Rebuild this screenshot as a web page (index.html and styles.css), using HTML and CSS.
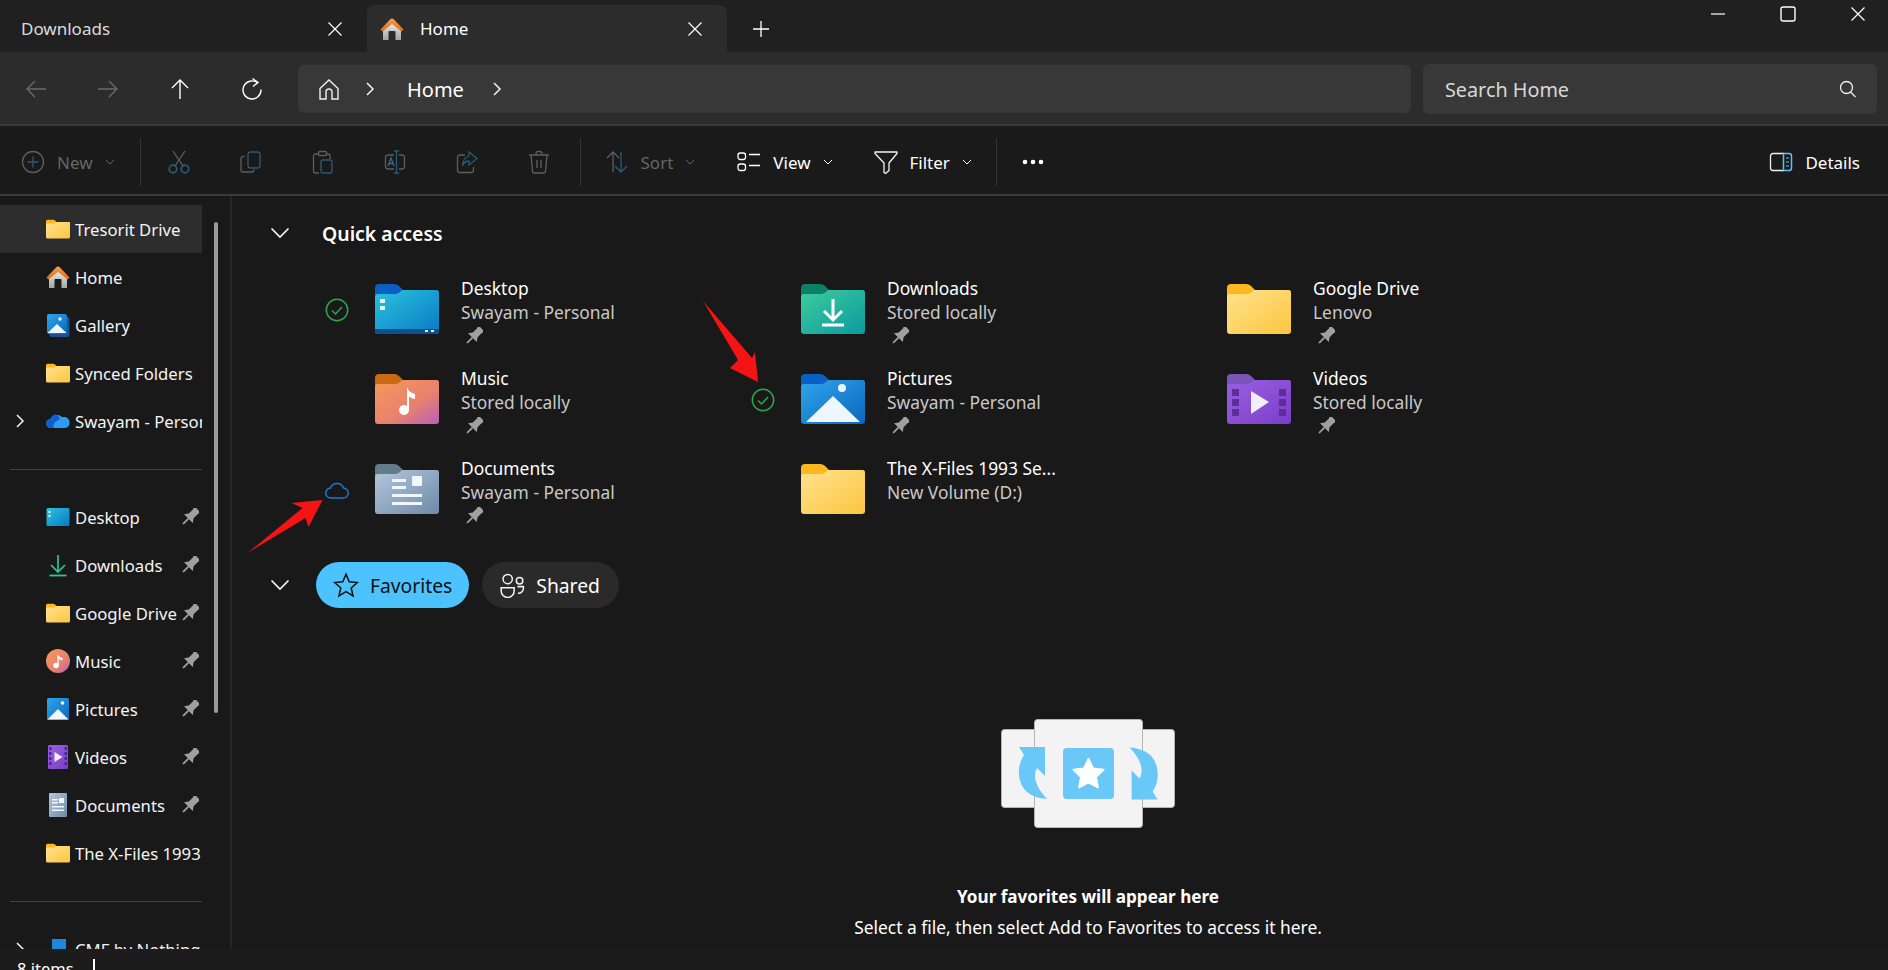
FILE: index.html
```html
<!DOCTYPE html>
<html lang="en">
<head>
    <meta charset="UTF-8">
    <meta name="viewport" content="width=device-width, initial-scale=1.0">
    <title>Home - File Explorer</title>
    <link rel="stylesheet" href="styles.css">
</head>
<body>
    <!-- shared icons -->
    <svg class="sprite" aria-hidden="true">
        <defs>
            <linearGradient id="g-yellow" x1="0" y1="0" x2="1" y2="1"><stop offset="0" stop-color="#ffe28f"/><stop offset="1" stop-color="#fcc63f"/></linearGradient>
            <linearGradient id="g-cyan" x1="0" y1="0" x2="1" y2="1"><stop offset="0" stop-color="#2ac4df"/><stop offset="1" stop-color="#0a78c4"/></linearGradient>
            <linearGradient id="g-green" x1="0" y1="0" x2="1" y2="1"><stop offset="0" stop-color="#3ecb9f"/><stop offset="1" stop-color="#0b9a9e"/></linearGradient>
            <linearGradient id="g-music" x1="0" y1="0" x2="1" y2="1"><stop offset="0" stop-color="#f59a57"/><stop offset=".6" stop-color="#e8806f"/><stop offset="1" stop-color="#b860b8"/></linearGradient>
            <linearGradient id="g-blue" x1="0" y1="0" x2="1" y2="1"><stop offset="0" stop-color="#2fa6ea"/><stop offset="1" stop-color="#0b66bd"/></linearGradient>
            <linearGradient id="g-purple" x1="0" y1="0" x2="1" y2="1"><stop offset="0" stop-color="#9a5fe0"/><stop offset="1" stop-color="#7a3fc8"/></linearGradient>
            <linearGradient id="g-docs" x1="0" y1="0" x2="1" y2="1"><stop offset="0" stop-color="#b4c7dc"/><stop offset="1" stop-color="#6e8aa8"/></linearGradient>
            <linearGradient id="g-house" x1="0" y1="0" x2="0" y2="1"><stop offset="0" stop-color="#f4f4f4"/><stop offset="1" stop-color="#a4a4a4"/></linearGradient>
            <linearGradient id="g-roof" x1="0" y1="0" x2="0" y2="1"><stop offset="0" stop-color="#f6a14a"/><stop offset="1" stop-color="#dd6a10"/></linearGradient>

            <symbol id="f-yellow" viewBox="0 0 64 50">
                <path d="M0 4a4 4 0 0 1 4-4h15q3 0 5 2l4 4h33a3 3 0 0 1 3 3v8H0z" fill="#fdb820"/>
                <path d="M0 13a3 3 0 0 1 3-3h17q3 0 5-2l2-2h34a3 3 0 0 1 3 3v38a3 3 0 0 1-3 3H3a3 3 0 0 1-3-3z" fill="url(#g-yellow)"/>
            </symbol>
            <symbol id="f-desktop" viewBox="0 0 64 50">
                <path d="M0 4a4 4 0 0 1 4-4h15q3 0 5 2l4 4h33a3 3 0 0 1 3 3v8H0z" fill="#0a5fc4"/>
                <path d="M0 13a3 3 0 0 1 3-3h17q3 0 5-2l2-2h34a3 3 0 0 1 3 3v38a3 3 0 0 1-3 3H3a3 3 0 0 1-3-3z" fill="url(#g-cyan)"/>
                <path d="M0 45h64v2a3 3 0 0 1-3 3H3a3 3 0 0 1-3-3z" fill="#0f4f8f"/>
                <path d="M5 15h5v4H5zM5 22h5v4H5zM50 46h3v2h-3zM56 46h3v2h-3z" fill="#e4f4fb"/>
            </symbol>
            <symbol id="f-downloads" viewBox="0 0 64 50">
                <path d="M0 4a4 4 0 0 1 4-4h15q3 0 5 2l4 4h33a3 3 0 0 1 3 3v8H0z" fill="#0b7f68"/>
                <path d="M0 13a3 3 0 0 1 3-3h17q3 0 5-2l2-2h34a3 3 0 0 1 3 3v38a3 3 0 0 1-3 3H3a3 3 0 0 1-3-3z" fill="url(#g-green)"/>
                <path d="M32 15v20M23 27l9 9 9-9" fill="none" stroke="#fff" stroke-width="3"/>
                <path d="M21 41h22" stroke="#fff" stroke-width="3"/>
            </symbol>
            <symbol id="f-music" viewBox="0 0 64 50">
                <path d="M0 4a4 4 0 0 1 4-4h15q3 0 5 2l4 4h33a3 3 0 0 1 3 3v8H0z" fill="#c96a12"/>
                <path d="M0 13a3 3 0 0 1 3-3h17q3 0 5-2l2-2h34a3 3 0 0 1 3 3v38a3 3 0 0 1-3 3H3a3 3 0 0 1-3-3z" fill="url(#g-music)"/>
                <circle cx="29" cy="36" r="5" fill="#fff"/>
                <path d="M32 36V13q1 5 8 7v5q-5-1-6-3v14z" fill="#fff"/>
            </symbol>
            <symbol id="f-pictures" viewBox="0 0 64 50">
                <path d="M0 4a4 4 0 0 1 4-4h15q3 0 5 2l4 4h33a3 3 0 0 1 3 3v8H0z" fill="#0a5fc4"/>
                <path d="M0 13a3 3 0 0 1 3-3h17q3 0 5-2l2-2h34a3 3 0 0 1 3 3v38a3 3 0 0 1-3 3H3a3 3 0 0 1-3-3z" fill="url(#g-blue)"/>
                <path d="M5 48l27-26 27 26z" fill="#eef7fd"/>
                <circle cx="41" cy="14" r="4" fill="#e8f5fd"/>
            </symbol>
            <symbol id="f-videos" viewBox="0 0 64 50">
                <path d="M0 4a4 4 0 0 1 4-4h15q3 0 5 2l4 4h33a3 3 0 0 1 3 3v8H0z" fill="#7a55b8"/>
                <path d="M0 13a3 3 0 0 1 3-3h17q3 0 5-2l2-2h34a3 3 0 0 1 3 3v38a3 3 0 0 1-3 3H3a3 3 0 0 1-3-3z" fill="url(#g-purple)"/>
                <path d="M5 15h7v7H5zM5 25h7v7H5zM5 35h7v7H5zM52 15h7v7h-7zM52 25h7v7h-7zM52 35h7v7h-7z" fill="#5a2f9a"/>
                <path d="M24 17l18 11-18 12z" fill="#f3eefb"/>
            </symbol>
            <symbol id="f-docs" viewBox="0 0 64 50">
                <path d="M0 4a4 4 0 0 1 4-4h15q3 0 5 2l4 4h33a3 3 0 0 1 3 3v8H0z" fill="#637c8c"/>
                <path d="M0 13a3 3 0 0 1 3-3h17q3 0 5-2l2-2h34a3 3 0 0 1 3 3v38a3 3 0 0 1-3 3H3a3 3 0 0 1-3-3z" fill="url(#g-docs)"/>
                <path d="M17 15h14v3H17zM17 22h14v3H17zM17 30h30v3H17zM17 38h30v3H17z" fill="#f2f6fa"/>
                <rect x="37" y="12" width="10" height="10" rx="1" fill="#f2f6fa"/>
            </symbol>

            <symbol id="pin" viewBox="0 0 16 16">
                <g transform="rotate(45 8 8)" fill="#a0a0a0">
                    <path d="M3.500 -1.500h9v2h-1.500v6l2.500 3.500H2.500l2.500-3.500v-6H3.500z"/>
                    <path d="M7.200 10h1.600v6l-.8 1.500-.8-1.500z"/>
                </g>
            </symbol>
            <symbol id="house" viewBox="0 0 24 24">
                <path d="M3 11L12 3l9 8v12h-5.500V15a1 1 0 0 0-1-1h-5a1 1 0 0 0-1 1v8H3z" fill="url(#g-house)"/>
                <path d="M.5 12.500L10 2.500q2-2 4 0l9.500 10-1.800 2L12 7 2.300 14.500z" fill="url(#g-roof)"/>
            </symbol>
            <symbol id="gallery" viewBox="0 0 24 24">
                <rect x="3.500" y="4" width="20" height="20" rx="2" fill="#1d4f94"/>
                <rect x="1" y="1" width="20" height="20" rx="2" fill="url(#g-blue)"/>
                <path d="M1.500 20L11 11l9.500 9z" fill="#eef7fd"/>
                <circle cx="14" cy="6" r="1.700" fill="#eef7fd"/>
            </symbol>
            <symbol id="cloud" viewBox="0 0 24 24">
                <path d="M5 19a4.500 4.500 0 0 1-.6-9A7 7 0 0 1 16 8.300 5.500 5.500 0 0 1 23.500 14a5 5 0 0 1-4.500 5z" fill="#2f9cf0"/>
                <path d="M5 19a4.500 4.500 0 0 1-.6-9A7 7 0 0 1 9.500 5.300 7 7 0 0 1 14 10l-3 2a5 5 0 0 0-3 7z" fill="#0f5fd0"/>
            </symbol>
            <symbol id="desktop" viewBox="0 0 24 24">
                <rect x="0.500" y="3" width="23" height="18" rx="1.500" fill="url(#g-cyan)"/>
                <path d="M2.500 6h2v2h-2zM2.500 10h2v2h-2z" fill="#e4f4fb"/>
            </symbol>
            <symbol id="dl" viewBox="0 0 24 24">
                <path d="M12 2v16M5 12l7 7 7-7" fill="none" stroke="#2fc39a" stroke-width="1.700"/>
                <path d="M3.500 22.500h17" stroke="#2fc39a" stroke-width="1.800"/>
            </symbol>
            <symbol id="music" viewBox="0 0 24 24">
                <circle cx="12" cy="12" r="12" fill="url(#g-music)"/>
                <circle cx="10" cy="16.500" r="2.800" fill="#fff"/>
                <path d="M11.500 16.500V5q1 3 5 4v2.500q-3-.5-3.800-2V16.500z" fill="#fff"/>
            </symbol>
            <symbol id="pics" viewBox="0 0 24 24">
                <rect x="1" y="1" width="22" height="22" rx="1.500" fill="url(#g-blue)"/>
                <path d="M1.500 22.500L12 12l10.500 10.500z" fill="#eef7fd"/>
                <circle cx="16.500" cy="6" r="1.800" fill="#eef7fd"/>
            </symbol>
            <symbol id="vids" viewBox="0 0 24 24">
                <rect x="2" y="0" width="20" height="24" rx="1.500" fill="url(#g-purple)"/>
                <path d="M3 2h2.500v3H3zM3 7h2.500v3H3zM3 12h2.500v3H3zM3 17h2.500v3H3zM18.500 2H21v3h-2.500zM18.500 7H21v3h-2.500zM18.500 12H21v3h-2.500zM18.500 17H21v3h-2.500z" fill="#4d2794"/>
                <path d="M8.500 7l8 5-8 5z" fill="#f3eefb"/>
            </symbol>
            <symbol id="docs" viewBox="0 0 24 24">
                <rect x="3" y="0" width="18" height="24" rx="1" fill="url(#g-docs)"/>
                <path d="M6 6h6v1.500H6zM6 9h6v1.500H6zM6 13h12v1.500H6zM6 16.500h12V18H6z" fill="#f2f6fa"/>
                <rect x="13" y="5" width="5" height="5" fill="#f2f6fa"/>
            </symbol>
            <symbol id="tick" viewBox="0 0 24 24">
                <circle cx="12" cy="12" r="10.700" fill="none" stroke="#2aa84a" stroke-width="1.500"/>
                <path d="M7 12.500l3.500 3.500L17 9" fill="none" stroke="#2aa84a" stroke-width="1.500"/>
            </symbol>
            <symbol id="x" viewBox="0 0 16 16"><path d="M1.500 1.500l13 13M14.500 1.500l-13 13" stroke="#fff" stroke-width="1.200" fill="none"/></symbol>
            <symbol id="chev-r" viewBox="0 0 12 16"><path d="M3 2l6 6-6 6" stroke="#f2f2f2" stroke-width="1.500" fill="none"/></symbol>
            <symbol id="chev-d" viewBox="0 0 10 6"><path d="M1 1l4 4 4-4" stroke="currentColor" stroke-width="1" fill="none"/></symbol>
            <symbol id="chev-big" viewBox="0 0 20 12"><path d="M1.500 1.500L10 10l8.500-8.500" stroke="#f4f4f4" stroke-width="1.700" fill="none"/></symbol>
        </defs>
    </svg>

    <!-- tab strip -->
    <div class="tabbar">
        <div class="tab">
            <span class="tab-title dim">Downloads</span>
            <svg class="tab-x"><use href="#x"/></svg>
        </div>
        <div class="tab active">
            <svg class="tab-icon"><use href="#house"/></svg>
            <span class="tab-title">Home</span>
            <svg class="tab-x"><use href="#x"/></svg>
        </div>
        <svg class="tab-plus" viewBox="0 0 18 18"><path d="M9 1v16M1 9h16" stroke="#fff" stroke-width="1.300"/></svg>
        <div class="window-btns">
            <svg class="win-btn" viewBox="0 0 16 16"><path d="M1 8h14" stroke="#fff" stroke-width="1.200"/></svg>
            <svg class="win-btn" viewBox="0 0 16 16"><rect x="1" y="1" width="14" height="14" rx="2" fill="none" stroke="#fff" stroke-width="1.400"/></svg>
            <svg class="win-btn" viewBox="0 0 16 16"><use href="#x"/></svg>
        </div>
    </div>

    <!-- address row -->
    <div class="navbar">
        <div class="nav-btns">
            <svg class="nav-btn" viewBox="0 0 24 24"><path d="M22 12H3M11 4l-8 8 8 8" fill="none" stroke="#6a6a6a" stroke-width="1.400"/></svg>
            <svg class="nav-btn" viewBox="0 0 24 24"><path d="M2 12h19M13 4l8 8-8 8" fill="none" stroke="#6a6a6a" stroke-width="1.400"/></svg>
            <svg class="nav-btn" viewBox="0 0 24 24"><path d="M12 22V3M4 11l8-8 8 8" fill="none" stroke="#fff" stroke-width="1.400"/></svg>
            <svg class="nav-btn" viewBox="0 0 24 24"><path d="M17.500 5.800A9 9 0 1 0 21 12.500" fill="none" stroke="#fff" stroke-width="1.400"/><path d="M12.500 1.500l5.500 4-5 4" fill="none" stroke="#fff" stroke-width="1.400"/></svg>
        </div>
        <div class="address">
            <svg class="crumb-home" viewBox="0 0 24 24"><path d="M3 11.500L12 3l9 8.500V22h-6v-7a3 3 0 0 0-6 0v7H3z" fill="none" stroke="#f0f0f0" stroke-width="1.400"/></svg>
            <svg class="crumb-chev"><use href="#chev-r"/></svg>
            <span class="crumb">Home</span>
            <svg class="crumb-chev"><use href="#chev-r"/></svg>
        </div>
        <div class="search">
            <span>Search Home</span>
            <svg class="search-icon" viewBox="0 0 18 18"><circle cx="7.500" cy="7.500" r="6" fill="none" stroke="#eee" stroke-width="1.300"/><path d="M11.500 12l5 5" stroke="#eee" stroke-width="1.300"/></svg>
        </div>
    </div>

    <!-- command bar -->
    <div class="toolbar">
        <div class="tool first off">
            <svg class="tool-icon" viewBox="0 0 24 24"><circle cx="12" cy="12" r="10.500" fill="none" stroke="#5e5e5e" stroke-width="1.300"/><path d="M12 6.500v11M6.500 12h11" stroke="#2a5a78" stroke-width="1.400"/></svg>
            <span>New</span>
            <svg class="tool-chev"><use href="#chev-d"/></svg>
        </div>
        <span class="tool-sep"></span>
        <div class="tool-grid">
            <svg class="tool-icon" viewBox="0 0 24 24"><circle cx="6" cy="19" r="3.800" fill="none" stroke="#2a5a78" stroke-width="1.700"/><circle cx="18" cy="19" r="3.800" fill="none" stroke="#2a5a78" stroke-width="1.700"/><path d="M8 16L18 1M16 16L6 1" stroke="#5e5e5e" stroke-width="1.300"/></svg>
            <svg class="tool-icon" viewBox="0 0 24 24"><path d="M5.500 6.500H4a2 2 0 0 0-2 2V20a2 2 0 0 0 2 2h9a2 2 0 0 0 2-2v-.5" fill="none" stroke="#5e5e5e" stroke-width="1.300"/><rect x="9" y="2" width="12" height="16" rx="2.500" fill="none" stroke="#2a5a78" stroke-width="1.300"/></svg>
            <svg class="tool-icon" viewBox="0 0 24 24"><path d="M7.500 4H4.500a2 2 0 0 0-2 2v15a2 2 0 0 0 2 2H8M15 4h2a2 2 0 0 1 2 2v3" fill="none" stroke="#5e5e5e" stroke-width="1.300"/><rect x="7.500" y="1.500" width="8" height="4" rx="1" fill="none" stroke="#5e5e5e" stroke-width="1.300"/><rect x="10" y="10" width="11" height="13" rx="2" fill="none" stroke="#2a5a78" stroke-width="1.300"/></svg>
            <svg class="tool-icon" viewBox="0 0 24 24"><path d="M11 5H5a2.500 2.500 0 0 0-2.500 2.500v9A2.500 2.500 0 0 0 5 19h6M16 5h3a2.500 2.500 0 0 1 2.500 2.500v9A2.500 2.500 0 0 1 19 19h-3" fill="none" stroke="#5e5e5e" stroke-width="1.300"/><path d="M13.500 1v22M11 1h5M11 23h5" stroke="#2a5a78" stroke-width="1.300"/><path d="M5 16l3-8 3 8M6 13.500h4" fill="none" stroke="#3d6a88" stroke-width="1.300"/></svg>
            <svg class="tool-icon" viewBox="0 0 24 24"><path d="M10 5H5a2.500 2.500 0 0 0-2.500 2.500V20A2.500 2.500 0 0 0 5 22.500h11a2.500 2.500 0 0 0 2.500-2.500v-3" fill="none" stroke="#5e5e5e" stroke-width="1.300"/><path d="M14 2l8 6.500-8 6.500v-4q-5 0-6.500 5 0-8 6.500-10z" fill="none" stroke="#2a5a78" stroke-width="1.300"/></svg>
            <svg class="tool-icon" viewBox="0 0 24 24"><path d="M2 5h20M9 5V3a2 2 0 0 1 2-1.500h2A2 2 0 0 1 15 3v2M4 5l1.500 16a2 2 0 0 0 2 2h9a2 2 0 0 0 2-2L20 5M10 10v8M14 10v8" fill="none" stroke="#5e5e5e" stroke-width="1.300"/></svg>
        </div>
        <span class="tool-sep"></span>
        <div class="tool off sort">
            <svg class="tool-icon" viewBox="0 0 24 24"><path d="M8 22V2M2 8l6-6 6 6" fill="none" stroke="#5e5e5e" stroke-width="1.300"/><path d="M16 2v20M10 16l6 6 6-6" fill="none" stroke="#2a5a78" stroke-width="1.300"/></svg>
            <span>Sort</span>
            <svg class="tool-chev"><use href="#chev-d"/></svg>
        </div>
        <div class="tool view">
            <svg class="tool-icon" viewBox="0 0 24 24"><rect x="1" y="3" width="7.500" height="6.500" rx="2.200" fill="none" stroke="#fff" stroke-width="1.300"/><rect x="1" y="14" width="7.500" height="6.500" rx="2.200" fill="none" stroke="#fff" stroke-width="1.300"/><path d="M12 4.500h11M12 15.500h11" stroke="#fff" stroke-width="1.300"/></svg>
            <span>View</span>
            <svg class="tool-chev"><use href="#chev-d"/></svg>
        </div>
        <div class="tool filter">
            <svg class="tool-icon" viewBox="0 0 24 24"><path d="M1 2h22v1.500L15 13v7.500L11.500 23.500 10 22.500V13L1 3.500z" fill="none" stroke="#f4f4f4" stroke-width="1.300" stroke-linejoin="round"/></svg>
            <span>Filter</span>
            <svg class="tool-chev"><use href="#chev-d"/></svg>
        </div>
        <span class="tool-sep last"></span>
        <svg class="tool-more" viewBox="0 0 24 6"><circle cx="4" cy="3" r="2.300" fill="#fff"/><circle cx="12" cy="3" r="2.300" fill="#fff"/><circle cx="20" cy="3" r="2.300" fill="#fff"/></svg>
        <div class="tool details">
            <svg class="tool-icon" viewBox="0 0 24 24"><path d="M15 3.500H4a2.500 2.500 0 0 0-2.500 2.500v12A2.500 2.500 0 0 0 4 20.500h11" fill="none" stroke="#f0f0f0" stroke-width="1.300"/><path d="M14.500 3.500H20A2.500 2.500 0 0 1 22.500 6v12a2.500 2.500 0 0 1-2.500 2.500h-5.500z" fill="none" stroke="#5cc0f2" stroke-width="1.500"/><path d="M17 8h3M17 12h3M17 16h3" stroke="#5cc0f2" stroke-width="1.200"/></svg>
            <span>Details</span>
        </div>
    </div>

    <div class="content">
        <!-- left tree -->
        <aside class="sidebar">
            <div class="side-row selected"><svg class="side-icon"><use href="#f-yellow"/></svg><span class="side-label">Tresorit Drive</span></div>
            <div class="side-row"><svg class="side-icon"><use href="#house"/></svg><span class="side-label">Home</span></div>
            <div class="side-row"><svg class="side-icon"><use href="#gallery"/></svg><span class="side-label">Gallery</span></div>
            <div class="side-row"><svg class="side-icon"><use href="#f-yellow"/></svg><span class="side-label">Synced Folders</span></div>
            <div class="side-row"><svg class="side-caret"><use href="#chev-r"/></svg><svg class="side-icon"><use href="#cloud"/></svg><span class="side-label">Swayam - Personal</span></div>
            <div class="side-divider"></div>
            <div class="side-row"><svg class="side-icon"><use href="#desktop"/></svg><span class="side-label">Desktop</span><svg class="side-pin"><use href="#pin"/></svg></div>
            <div class="side-row"><svg class="side-icon"><use href="#dl"/></svg><span class="side-label">Downloads</span><svg class="side-pin"><use href="#pin"/></svg></div>
            <div class="side-row"><svg class="side-icon"><use href="#f-yellow"/></svg><span class="side-label">Google Drive</span><svg class="side-pin"><use href="#pin"/></svg></div>
            <div class="side-row"><svg class="side-icon"><use href="#music"/></svg><span class="side-label">Music</span><svg class="side-pin"><use href="#pin"/></svg></div>
            <div class="side-row"><svg class="side-icon"><use href="#pics"/></svg><span class="side-label">Pictures</span><svg class="side-pin"><use href="#pin"/></svg></div>
            <div class="side-row"><svg class="side-icon"><use href="#vids"/></svg><span class="side-label">Videos</span><svg class="side-pin"><use href="#pin"/></svg></div>
            <div class="side-row"><svg class="side-icon"><use href="#docs"/></svg><span class="side-label">Documents</span><svg class="side-pin"><use href="#pin"/></svg></div>
            <div class="side-row"><svg class="side-icon"><use href="#f-yellow"/></svg><span class="side-label">The X-Files 1993 Season</span></div>
            <div class="side-divider"></div>
            <div class="side-row"><svg class="side-caret"><use href="#chev-r"/></svg><svg class="side-icon"><rect x="6" y="2" width="14" height="18" fill="#1f86d8"/></svg><span class="side-label">CMF by Nothing</span></div>
            <div class="side-thumb"></div>
        </aside>

        <main class="main">
            <div class="section-head">
                <svg class="section-chev"><use href="#chev-big"/></svg>
                <h2>Quick access</h2>
            </div>

            <div class="grid">
                <div class="item">
                    <svg class="item-state"><use href="#tick"/></svg>
                    <svg class="item-icon"><use href="#f-desktop"/></svg>
                    <div class="item-text"><div class="item-name">Desktop</div><div class="item-sub">Swayam - Personal</div><svg class="item-pin"><use href="#pin"/></svg></div>
                </div>
                <div class="item">
                    <span class="item-state"></span>
                    <svg class="item-icon"><use href="#f-downloads"/></svg>
                    <div class="item-text"><div class="item-name">Downloads</div><div class="item-sub">Stored locally</div><svg class="item-pin"><use href="#pin"/></svg></div>
                </div>
                <div class="item">
                    <span class="item-state"></span>
                    <svg class="item-icon"><use href="#f-yellow"/></svg>
                    <div class="item-text"><div class="item-name">Google Drive</div><div class="item-sub">Lenovo</div><svg class="item-pin"><use href="#pin"/></svg></div>
                </div>
                <div class="item">
                    <span class="item-state"></span>
                    <svg class="item-icon"><use href="#f-music"/></svg>
                    <div class="item-text"><div class="item-name">Music</div><div class="item-sub">Stored locally</div><svg class="item-pin"><use href="#pin"/></svg></div>
                </div>
                <div class="item">
                    <svg class="item-state"><use href="#tick"/></svg>
                    <svg class="item-icon"><use href="#f-pictures"/></svg>
                    <div class="item-text"><div class="item-name">Pictures</div><div class="item-sub">Swayam - Personal</div><svg class="item-pin"><use href="#pin"/></svg></div>
                </div>
                <div class="item">
                    <span class="item-state"></span>
                    <svg class="item-icon"><use href="#f-videos"/></svg>
                    <div class="item-text"><div class="item-name">Videos</div><div class="item-sub">Stored locally</div><svg class="item-pin"><use href="#pin"/></svg></div>
                </div>
                <div class="item">
                    <svg class="item-state" viewBox="0 0 24 24"><path d="M6 20a5 5 0 0 1-.6-10A7 7 0 0 1 18.500 10 5 5 0 0 1 18 20z" fill="none" stroke="#1a78d0" stroke-width="1.500"/></svg>
                    <svg class="item-icon"><use href="#f-docs"/></svg>
                    <div class="item-text"><div class="item-name">Documents</div><div class="item-sub">Swayam - Personal</div><svg class="item-pin"><use href="#pin"/></svg></div>
                </div>
                <div class="item">
                    <span class="item-state"></span>
                    <svg class="item-icon"><use href="#f-yellow"/></svg>
                    <div class="item-text"><div class="item-name">The X-Files 1993 Se...</div><div class="item-sub">New Volume (D:)</div></div>
                </div>
            </div>

            <div class="pills-row">
                <svg class="section-chev"><use href="#chev-big"/></svg>
                <div class="pill on">
                    <svg class="pill-icon" viewBox="0 0 24 24"><path d="M12 2l3 7 7.500.7-5.700 5 1.700 7.300-6.500-3.800L5.500 22l1.700-7.300-5.700-5L9 9z" fill="none" stroke="#111" stroke-width="1.400"/></svg>
                    <span>Favorites</span>
                </div>
                <div class="pill">
                    <svg class="pill-icon" viewBox="0 0 24 24"><circle cx="8" cy="6.500" r="4.300" fill="none" stroke="#f2f2f2" stroke-width="1.400"/><circle cx="19" cy="8" r="3" fill="none" stroke="#f2f2f2" stroke-width="1.400"/><path d="M2 14.500h12v3a5.500 5.500 0 0 1-12 0zM17 13.500h5.500v2a4.500 4.500 0 0 1-5 4" fill="none" stroke="#f2f2f2" stroke-width="1.400"/></svg>
                    <span>Shared</span>
                </div>
            </div>

            <div class="empty">
                <svg class="empty-art" viewBox="0 0 174 110">
                    <rect x=".5" y="10.500" width="173" height="78" rx="3" fill="#f3f3f3" stroke="#b5b5b5"/>
                    <rect x="33.500" y=".5" width="108" height="108" rx="3" fill="#f3f3f3" stroke="#b5b5b5"/>
                    <path d="M18 28H44V57L36 49Q29 62 46 80 20 78 18 56 17 45 23 36Z" fill="#69c8f7"/>
                    <path d="M18 28H44V57L36 49Q29 62 46 80 20 78 18 56 17 45 23 36Z" fill="#69c8f7" transform="rotate(180 87.300 54.300)"/>
                    <rect x="62" y="29" width="51" height="51" rx="4" fill="#69c8f7"/>
                    <path d="M87.500 40l4.600 9.500 10.400 1.300-7.600 7.200 2 10.300-9.400-5-9.400 5 2-10.300-7.600-7.200 10.400-1.300z" fill="#fff" stroke="#fff" stroke-linejoin="round" stroke-width="2"/>
                </svg>
                <h3>Your favorites will appear here</h3>
                <p>Select a file, then select Add to Favorites to access it here.</p>
            </div>

            <!-- annotation arrows -->
            <svg class="arrow arrow-cloud" viewBox="0 0 76 54"><path d="M0 54L55 9 44 4 75 1 61 28 58 19Z" fill="#f41414"/></svg>
            <svg class="arrow arrow-check" viewBox="0 0 58 84"><path d="M1 1L50 58 53 52 56 82 28 68 36 60Z" fill="#f41414"/></svg>
        </main>
    </div>

    <div class="statusbar">
        <span>8 items</span>
        <span class="status-sep"></span>
    </div>
</body>
</html>
```

FILE: styles.css
```css
* {
    margin: 0;
    padding: 0;
    box-sizing: border-box;
}

body {
    width: 1888px;
    height: 970px;
    overflow: hidden;
    display: flex;
    flex-direction: column;
    background-color: #191919;
    color: #ffffff;
    font-family: "Noto Sans", "Open Sans", sans-serif;
    font-size: 17px;
}

.sprite {
    width: 0;
    height: 0;
    flex: none;
}

/* tab strip */
.tabbar {
    height: 52px;
    flex: none;
    display: flex;
    align-items: flex-end;
    background-color: #202020;
}

.tab {
    width: 367px;
    height: 47px;
    display: flex;
    align-items: center;
    padding: 0 24px 0 21px;
}

.tab.active {
    width: 360px;
    padding: 0 24px 0 13px;
    background-color: #2c2c2c;
    border-radius: 8px 8px 0 0;
}

.tab-icon {
    width: 24px;
    height: 24px;
    margin-right: 16px;
}

.tab-title {
    flex: 1;
}

.tab-title.dim {
    color: #dcdcdc;
}

.tab-x {
    width: 16px;
    height: 16px;
}

.tab-plus {
    width: 18px;
    height: 18px;
    margin: 0 0 14px 25px;
}

.window-btns {
    align-self: flex-start;
    margin-left: auto;
    display: flex;
    gap: 54px;
    padding: 6px 22px 0 0;
}

.win-btn {
    width: 16px;
    height: 16px;
}

/* address row */
.navbar {
    height: 74px;
    flex: none;
    display: flex;
    align-items: center;
    padding: 2px 11px 0 0;
    background-color: #2c2c2c;
    border-bottom: 2px solid #3b3b3b;
}

.nav-btns {
    width: 298px;
    flex: none;
    display: flex;
    gap: 48px;
    padding-left: 24px;
}

.nav-btn {
    width: 24px;
    height: 24px;
}

.address {
    width: 1113px;
    height: 48px;
    flex: none;
    display: flex;
    align-items: center;
    padding-left: 19px;
    background-color: #383838;
    border-radius: 6px;
}

.crumb-home {
    width: 24px;
    height: 24px;
}

.crumb-chev {
    width: 12px;
    height: 16px;
    margin: 0 31px 0 23px;
}

.crumb + .crumb-chev {
    margin: 0 0 0 27px;
}

.crumb {
    font-size: 20px;
}

.search {
    width: 454px;
    height: 50px;
    flex: none;
    display: flex;
    align-items: center;
    justify-content: space-between;
    margin-left: 12px;
    padding: 0 20px 0 22px;
    background-color: #383838;
    border-radius: 6px;
    color: #d8d8d8;
    font-size: 19.800px;
}

.search-icon {
    width: 18px;
    height: 18px;
}

/* command bar */
.toolbar {
    height: 70px;
    flex: none;
    display: flex;
    align-items: center;
    padding-top: 4px;
    background-color: #1a1a1a;
    border-bottom: 2px solid #3b3b3b;
    font-size: 17px;
}

.tool {
    display: flex;
    align-items: center;
    gap: 12px;
}

.tool.off {
    color: #666666;
}

.tool.first {
    padding-left: 21px;
}

.tool.sort {
    margin-left: 24px;
}

.tool.view {
    margin-left: 42px;
}

.tool.filter {
    margin-left: 41px;
}

.tool.details {
    margin-left: auto;
    padding-right: 28px;
}

.tool-icon {
    width: 24px;
    height: 24px;
    flex: none;
}

.tool-chev {
    width: 10px;
    height: 6px;
    color: inherit;
}

.tool-sep {
    width: 1px;
    height: 48px;
    margin-left: 25px;
    background-color: #333333;
}

.tool-sep + .tool-grid {
    margin-left: 2px;
}

.tool-grid {
    width: 437px;
    display: grid;
    grid-template-columns: repeat(6, 72px);
    justify-items: center;
}

.tool-grid + .tool-sep {
    margin-left: 0;
}

.tool-sep.last {
    margin-left: 24px;
}

.tool-more {
    width: 24px;
    height: 6px;
    margin-left: 24px;
}

/* content */
.content {
    flex: 1;
    min-height: 0;
    display: flex;
}

.sidebar {
    width: 232px;
    flex: none;
    position: relative;
    overflow: hidden;
    padding-top: 9px;
    border-right: 2px solid #252525;
    font-size: 16.700px;
}

.side-row {
    width: 202px;
    height: 48px;
    display: flex;
    align-items: center;
    padding-left: 46px;
    color: #f4f4f4;
}

.side-row.selected {
    background-color: #2d2d2d;
}

.side-caret {
    width: 12px;
    height: 16px;
    margin: 0 20px 0 -32px;
    flex: none;
}

.side-icon {
    width: 24px;
    height: 24px;
    flex: none;
    margin-right: 5px;
}

.side-label {
    flex: 1;
    min-width: 0;
    overflow: hidden;
    white-space: nowrap;
}

.side-pin {
    width: 18px;
    height: 18px;
    flex: none;
    margin: 0 3px 0 1px;
}

.side-divider {
    height: 48px;
    width: 192px;
    margin-left: 10px;
    display: flex;
    align-items: center;
}

.side-divider::before {
    content: "";
    width: 100%;
    height: 1px;
    background-color: #444444;
}

.side-thumb {
    position: absolute;
    left: 214px;
    top: 26px;
    width: 4px;
    height: 491px;
    border-radius: 2px;
    background-color: #9a9a9a;
}

.main {
    flex: 1;
    min-width: 0;
    position: relative;
    padding-top: 16px;
}

.section-head {
    height: 42px;
    display: flex;
    align-items: center;
    padding-left: 38px;
}

.section-chev {
    width: 20px;
    height: 12px;
    flex: none;
}

.section-head h2 {
    margin-left: 32px;
    font-size: 19.400px;
    font-weight: 600;
}

.grid {
    margin: 10px 0 0 93px;
    display: grid;
    grid-template-columns: repeat(3, 426px);
    grid-auto-rows: 90px;
}

.item {
    display: flex;
    align-items: flex-start;
}

.item-state {
    width: 24px;
    height: 24px;
    flex: none;
    margin: 34px 26px 0 0;
}

.item-icon {
    width: 64px;
    height: 50px;
    flex: none;
    margin: 20px 22px 0 0;
}

.item-text {
    padding-top: 12px;
    line-height: 24px;
}

.item-name {
    font-size: 17.400px;
}

.item-sub {
    font-size: 17.400px;
    color: #c8c8c8;
}

.item-pin {
    display: block;
    width: 18px;
    height: 18px;
    margin: 3px 0 0 4px;
}

.pills-row {
    margin-top: 28px;
    padding-left: 38px;
    display: flex;
    align-items: center;
}

.pill {
    height: 46px;
    display: flex;
    align-items: center;
    gap: 11px;
    margin-left: 13px;
    padding: 0 19px 0 17px;
    border-radius: 23px;
    background-color: #2a2a2a;
    font-size: 19.300px;
}

.pill.on {
    margin-left: 26px;
    padding-right: 17px;
    background-color: #4cc2ff;
    color: #111111;
}

.pill-icon {
    width: 26px;
    height: 26px;
}

.empty {
    margin-top: 111px;
    padding-left: 56px;
    display: flex;
    flex-direction: column;
    align-items: center;
}

.empty-art {
    width: 174px;
    height: 110px;
}

.empty h3 {
    margin-top: 56px;
    font-size: 17.100px;
    font-weight: 700;
    line-height: 24px;
}

.empty p {
    margin-top: 6px;
    font-size: 17.400px;
    line-height: 24px;
}

/* red annotation arrows, on top of the page */
.arrow {
    position: absolute;
}

.arrow-cloud {
    left: 15px;
    top: 303px;
    width: 77px;
    height: 54px;
}

.arrow-check {
    left: 470px;
    top: 104px;
    width: 58px;
    height: 84px;
}

.statusbar {
    height: 21px;
    flex: none;
    display: flex;
    padding: 8px 0 0 17px;
    background-color: #1c1c1c;
    line-height: 24px;
    font-size: 16.500px;
}

.status-sep {
    width: 2px;
    height: 13px;
    margin: 2px 0 0 19px;
    background-color: #ffffff;
}
```
